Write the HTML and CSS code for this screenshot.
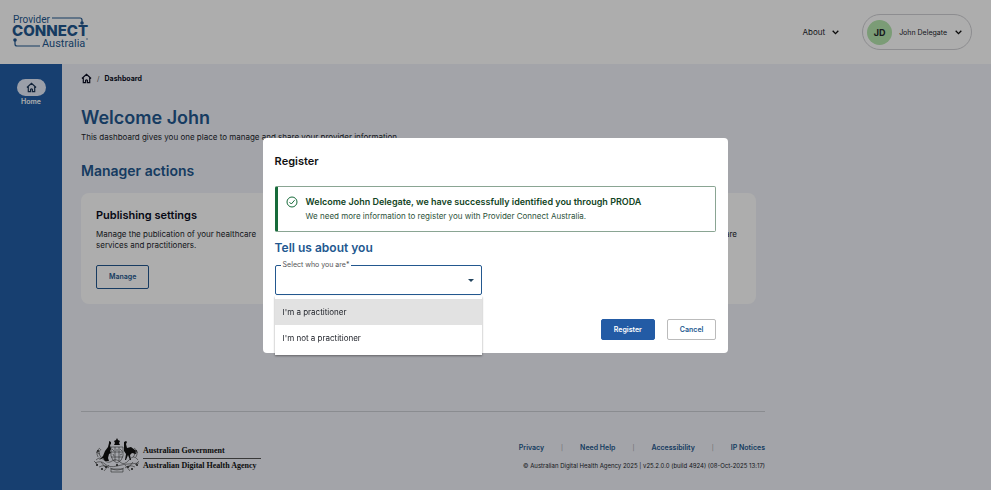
FILE: index.html
```html
<!DOCTYPE html>
<html lang="en">

<head>
    <meta charset="UTF-8">
    <meta name="viewport" content="width=device-width, initial-scale=1.0">
    <title>Provider Connect Australia</title>
    <link rel="stylesheet" href="styles.css">
</head>

<body>
    <!-- Header -->
    <header class="header">
        <a href="#" class="logo" aria-label="Provider Connect Australia">
            <svg width="78" height="36" viewBox="0 0 78 36">
                <text class="logo-thin" x="1" y="9">Provider</text>
                <text class="logo-bold" x="0" y="22">CONNECT</text>
                <text class="logo-thin logo-large" x="30" y="33">Australia</text>
                <path d="M40 4h28q2 0 2 2v2M3 27v3q0 2 2 2h23" fill="none" stroke="#23588f" stroke-width="1.2" />
                <circle cx="70" cy="9" r="1.8" fill="#23588f" />
                <circle cx="3" cy="26" r="1.8" fill="#23588f" />
                <path d="M74 25h2" stroke="#23588f" stroke-width=".7" />
            </svg>
        </a>
        <div class="header-nav">
            <button type="button" class="about">
                About
                <svg class="chevron" viewBox="0 0 8 8"><path d="M1.5 2.5L4 5l2.5-2.5" /></svg>
            </button>
            <button type="button" class="profile">
                <span class="avatar">JD</span>
                <span class="profile-name">John Delegate</span>
                <svg class="chevron" viewBox="0 0 8 8"><path d="M1.5 2.5L4 5l2.5-2.5" /></svg>
            </button>
        </div>
    </header>

    <div class="layout">
        <!-- Sidebar -->
        <nav class="sidebar">
            <a href="#" class="nav-item">
                <span class="nav-pill">
                    <svg class="home-icon" viewBox="0 0 12 12"><path d="M1 6l5-4.500L11 6M2.500 5v5.500H5V8q1-1.200 2 0v2.500h2.500V5" /></svg>
                </span>
                Home
            </a>
        </nav>

        <main class="main">
            <div class="breadcrumb">
                <a href="#" aria-label="Home"><svg class="home-icon" viewBox="0 0 12 12"><path d="M1 6l5-4.500L11 6M2.500 5v5.500H5V8q1-1.200 2 0v2.500h2.500V5" /></svg></a>
                <span class="slash">/</span>
                <strong>Dashboard</strong>
            </div>

            <h1>Welcome John</h1>
            <p class="intro">This dashboard gives you one place to manage and share your provider information.</p>

            <h2>Manager actions</h2>
            <div class="cards">
                <section class="card">
                    <h3>Publishing settings</h3>
                    <p>Manage the publication of your healthcare services and practitioners.</p>
                    <button type="button" class="btn btn-manage">Manage</button>
                </section>
                <section class="card card-end">
                    <p>healthcare</p>
                </section>
            </div>

            <!-- Footer -->
            <footer class="footer">
                <div class="agency">
                    <svg class="crest" viewBox="0 0 48 36">
                        <g fill="none" stroke="#222" stroke-width=".5">
                            <path d="M18 9h12v9q-1 5-6 7-5-2-6-7zM18 14h12M18 19h12M22 9v14M26 9v14M19 11l2 2M23 12h2M27 11l2 2M20 16l1 2M27 17l2-1" />
                            <path d="M3 22q4-4 8 0t8 1 8 1 9-2 9 0M2 25q6-3 10 1t12 2 11-2 11-1M6 29q6-3 10 1M42 29q-6-3-10 1" />
                            <path d="M5 19q-3-6 2-9M8 19q-4-4 0-8M43 19q3-6-2-9M40 19q4-4 0-8M17 30q7 4 14 0M16 27l-5 6M32 27l5 6" />
                            <path d="M1 23l4 4M46 23l-4 4M8 24l4 5M40 24l-4 5M18 31h12v3H18zM3 14l4 2M45 14l-4 2" />
                        </g>
                        <path fill="#111" d="M24 0l1 2 2 1-1 2 1 2h-6l1-2-1-2 2-1zM16 3l2 1v2l-1 1 1 4-1 2 1 2-2 1-1 4 1 3h-4l-2-3-4 2 4-4 2-5 3-4 1-4zM31 4l2-1 1 1-1 2 1 4 4-1 4 3 1 4-4-1-2 2 1 5h-1l-2-5-2 5h-1l1-6-2-3z" />
                        <g fill="#222">
                            <circle cx="5" cy="13" r="1" /><circle cx="43" cy="13" r="1" />
                            <circle cx="4" cy="27" r="1" /><circle cx="44" cy="27" r="1" />
                            <circle cx="13" cy="29" r="1" /><circle cx="35" cy="29" r="1" />
                            <circle cx="24" cy="27" r="1" /><circle cx="9" cy="31" r="1" /><circle cx="39" cy="31" r="1" />
                        </g>
                    </svg>
                    <div class="agency-name">
                        <span>Australian Government</span>
                        <span>Australian Digital Health Agency</span>
                    </div>
                </div>
                <div class="footer-info">
                    <div class="footer-links">
                        <a href="#">Privacy</a>
                        <a href="#">Need Help</a>
                        <a href="#">Accessibility</a>
                        <a href="#">IP Notices</a>
                    </div>
                    <p>© Australian Digital Health Agency 2025 | v25.2.0.0 (build 4924) (08-Oct-2025 13:17)</p>
                </div>
            </footer>
        </main>
    </div>

    <!-- Register dialog -->
    <div class="overlay">
        <form class="modal" role="dialog" aria-labelledby="modal-title">
            <h2 class="modal-title" id="modal-title">Register</h2>
            <div class="alert">
                <svg class="check" viewBox="0 0 12 12"><circle cx="6" cy="6" r="5" /><path d="M3.500 6.200l1.800 1.800 3.300-3.800" /></svg>
                <div>
                    <strong>Welcome John Delegate, we have successfully identified you through PRODA</strong>
                    <p>We need more information to register you with Provider Connect Australia.</p>
                </div>
            </div>
            <h3 class="modal-heading">Tell us about you</h3>
            <div class="field">
                <label for="who">Select who you are*</label>
                <select id="who">
                    <option></option>
                    <option>I'm a practitioner</option>
                    <option>I'm not a practitioner</option>
                </select>
                <ul class="options" role="listbox">
                    <li class="active" role="option">I'm a practitioner</li>
                    <li role="option">I'm not a practitioner</li>
                </ul>
            </div>
            <div class="modal-actions">
                <button type="button" class="btn btn-primary">Register</button>
                <button type="button" class="btn btn-cancel">Cancel</button>
            </div>
        </form>
    </div>
</body>

</html>
```

FILE: styles.css
```css
* {
    box-sizing: border-box;
}

body {
    margin: 0;
    min-height: 100vh;
    display: flex;
    flex-direction: column;
    font-family: Inter, "Liberation Sans", sans-serif;
    font-size: 8px;
    line-height: 11px;
    background: #f0f2f9;
    color: #22252c;
    overflow: hidden;
}

h1, h2, h3, p, ul {
    margin: 0;
    padding: 0;
}

a {
    color: inherit;
    text-decoration: none;
}

button, select {
    font: inherit;
    color: inherit;
}

/* Header */
.header {
    height: 64px;
    padding: 0 19px 0 12px;
    display: flex;
    align-items: center;
    justify-content: space-between;
    background: #fff;
}

.logo svg {
    display: block;
}

.logo text {
    fill: #23588f;
}

.logo-thin {
    font-family: Roboto, sans-serif;
    font-size: 10px;
}

.logo-large {
    font-size: 11px;
}

.logo-bold {
    font-size: 15px;
    font-weight: 800;
}

.header-nav {
    display: flex;
    align-items: center;
    gap: 22px;
}

.about, .profile {
    display: flex;
    align-items: center;
    border: 0;
    background: none;
    padding: 0;
}

.about {
    gap: 6px;
}

.profile {
    height: 36px;
    padding: 0 8px 0 4px;
    gap: 7px;
    border: 1px solid #d0d0d4;
    border-radius: 18px;
    font-size: 7px;
}

.avatar {
    width: 25px;
    height: 25px;
    border-radius: 50%;
    background: #b5e6ae;
    font-size: 9px;
    font-weight: 700;
    line-height: 25px;
    text-align: center;
}

.chevron {
    width: 9px;
    height: 9px;
    fill: none;
    stroke: #111;
    stroke-width: 1.2;
}

/* Page layout */
.layout {
    flex: 1;
    display: flex;
}

.sidebar {
    width: 62px;
    padding-top: 15px;
    background: #225ea5;
}

.nav-item {
    display: flex;
    flex-direction: column;
    align-items: center;
    color: #fff;
    font-size: 7px;
    font-weight: 600;
}

.nav-pill {
    width: 29px;
    height: 17px;
    border-radius: 9px;
    display: grid;
    place-items: center;
    background: #e3eafa;
    color: #1a3454;
}

.home-icon {
    display: block;
    width: 11px;
    height: 11px;
    fill: none;
    stroke: currentColor;
    stroke-width: 1.3;
}

.main {
    flex: 1;
    padding: 9px 226px 0 19px;
}

.breadcrumb {
    display: flex;
    align-items: center;
    gap: 5px;
    font-size: 7px;
    color: #0a0c22;
}

.slash {
    color: #666;
}

h1 {
    margin-top: 22px;
    font-size: 18px;
    font-weight: 600;
    line-height: 24px;
    color: #23588f;
}

.intro {
    margin-top: 2px;
}

.main h2 {
    margin-top: 18px;
    font-size: 14px;
    font-weight: 600;
    line-height: 20px;
    color: #23588f;
}

.cards {
    margin: 12px 9px 0 0;
    display: flex;
    justify-content: space-between;
}

.card {
    width: 32%;
    min-height: 110px;
    padding: 15px;
    border-radius: 8px;
    background: #fff;
}

.card h3 {
    margin-bottom: 6px;
    font-size: 11px;
    font-weight: 600;
    line-height: 15px;
    color: #0a0c22;
}

.card-end {
    padding: 36px 19px;
    text-align: right;
}

.btn {
    border-radius: 2px;
    font-size: 7px;
    font-weight: 600;
    line-height: 12px;
}

.btn-manage {
    margin-top: 14px;
    padding: 5px 12px;
    border: 1px solid #23588f;
    background: none;
    color: #23588f;
}

/* Footer */
.footer {
    margin-top: 107px;
    padding: 26px 0 0 12px;
    display: flex;
    justify-content: space-between;
    border-top: 1px solid #ccced4;
}

.agency {
    display: flex;
    align-items: center;
    gap: 2px;
}

.crest {
    width: 48px;
    height: 36px;
}

.agency-name {
    display: flex;
    flex-direction: column;
    padding-top: 4px;
    font-family: "Liberation Serif", serif;
    font-weight: 700;
    color: #111;
}

.agency-name span {
    padding-right: 4px;
    line-height: 14px;
}

.agency-name span + span {
    border-top: 1px solid #555;
}

.footer-info {
    padding-top: 4px;
    text-align: right;
    font-size: 6px;
}

.footer-links {
    margin-bottom: 7px;
    display: flex;
    justify-content: flex-end;
    font-size: 7px;
    font-weight: 600;
    color: #23588f;
}

.footer-links a + a::before {
    content: "|";
    margin: 0 17px;
    font-size: 6px;
    font-weight: 400;
    color: #999;
}

/* Register dialog */
.overlay {
    position: fixed;
    inset: 0;
    display: grid;
    place-items: center;
    background: rgba(0, 0, 0, 0.32);
}

.modal {
    width: 47vw;
    padding: 13px 12px;
    border-radius: 4px;
    background: #fff;
}

.modal-title {
    margin: 2px 0 17px;
    font-size: 11px;
    font-weight: 600;
    line-height: 16px;
    color: #111;
}

.alert {
    padding: 9px 8px;
    display: flex;
    gap: 8px;
    border: 1px solid #8aa593;
    border-left: 3px solid #176b3a;
    border-radius: 2px;
    color: #2c5239;
}

.alert strong {
    display: block;
    margin-bottom: 3px;
    font-size: 9px;
    font-weight: 600;
    line-height: 12px;
    color: #114424;
}

.check {
    width: 12px;
    height: 12px;
    fill: none;
    stroke: #176b3a;
}

.modal-heading {
    margin: 8px 0 9px;
    font-size: 12px;
    font-weight: 600;
    line-height: 16px;
    color: #23588f;
}

.field {
    position: relative;
    width: 47%;
}

.field label {
    position: absolute;
    top: -5px;
    left: 6px;
    padding: 0 2px;
    background: #fff;
    font-size: 7px;
    line-height: 10px;
    color: #555;
}

.field select {
    display: block;
    width: 100%;
    height: 30px;
    appearance: none;
    border: 1px solid #23588f;
    border-radius: 2px;
    background: #fff;
}

.field::after {
    content: "";
    position: absolute;
    top: 14px;
    right: 8px;
    border: 3px solid transparent;
    border-top-color: #23445f;
    border-bottom: 0;
}

.options {
    position: absolute;
    top: 31px;
    left: 0;
    right: 0;
    padding: 3px 0 4px;
    background: #fff;
    box-shadow: 0 1px 2px rgba(0, 0, 0, 0.4);
    list-style: none;
}

.options li {
    padding: 7px 8px;
    line-height: 12px;
}

.options .active {
    background: #e2e2e2;
}

.modal-actions {
    margin-top: 24px;
    display: flex;
    justify-content: flex-end;
    gap: 12px;
}

.modal-actions .btn {
    padding: 4px 12px;
    border: 1px solid #235ba5;
    line-height: 11px;
}

.modal-actions .btn-primary {
    background: #235ba5;
    color: #fff;
}

.modal-actions .btn-cancel {
    border-color: #bbb;
    background: #fff;
    color: #23588f;
}
```
